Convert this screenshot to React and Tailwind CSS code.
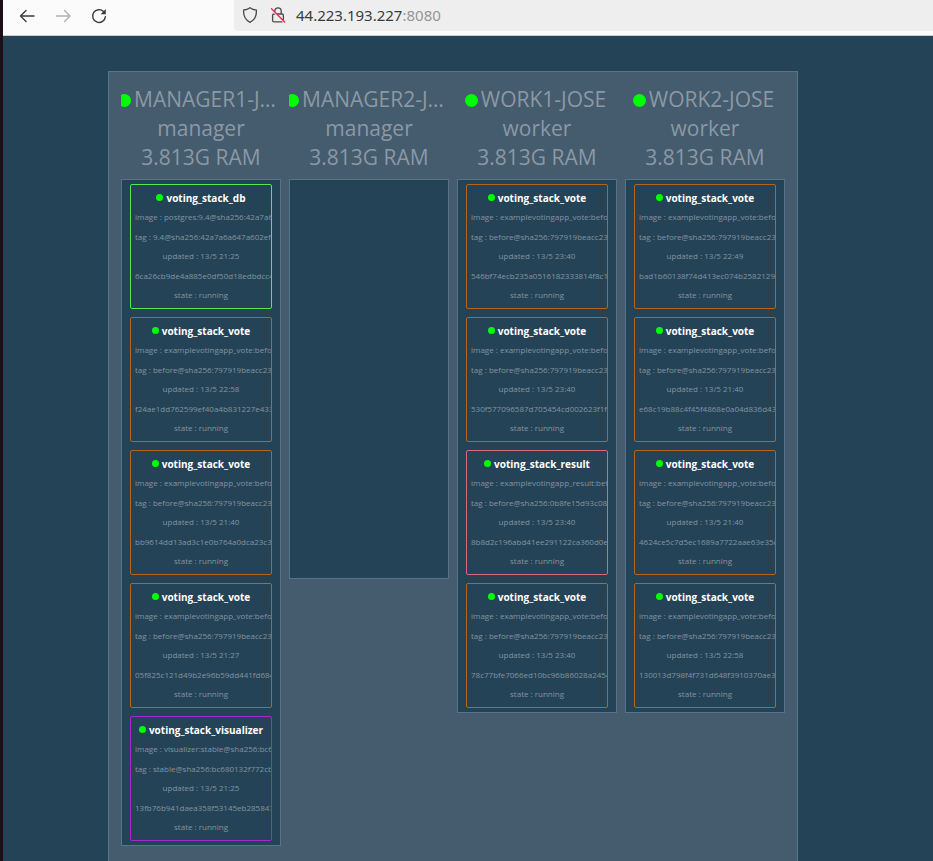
const VOTE_IMAGE = 'examplevotingapp_vote:befo';
const VOTE_TAG = 'before@sha256:797919beacc23';

const vote = (updated, id) => ({
  name: 'voting_stack_vote',
  image: VOTE_IMAGE,
  tag: VOTE_TAG,
  updated,
  id,
  border: 'border-[#b5651b]',
});

const NODES = [
  {
    name: 'MANAGER1-JOSE',
    role: 'manager',
    tasks: [
      {
        name: 'voting_stack_db',
        image: 'postgres:9.4@sha256:42a7a6a',
        tag: '9.4@sha256:42a7a6a647a602efa',
        updated: '13/5 21:25',
        id: '6ca26cb9de4a885e0df50d18edbdcc4',
        border: 'border-[#53e84b]',
      },
      vote('13/5 22:58', 'f24ae1dd762599ef40a4b831227e433'),
      vote('13/5 21:40', 'bb9614dd13ad3c1e0b764a0dca23c3'),
      vote('13/5 21:27', '05f825c121d49b2e96b59dd441fd684'),
      {
        name: 'voting_stack_visualizer',
        image: 'visualizer:stable@sha256:bc6',
        tag: 'stable@sha256:bc680132f772cb',
        updated: '13/5 21:25',
        id: '13fb76b941daea358f53145eb285847',
        border: 'border-[#a626d0]',
      },
    ],
  },
  { name: 'MANAGER2-JOSE', role: 'manager', tasks: [] },
  {
    name: 'WORK1-JOSE',
    role: 'worker',
    tasks: [
      vote('13/5 23:40', '546bf74ecb235a0516182333814f8c1'),
      vote('13/5 23:40', '530f577096587d705454cd002623f1f5'),
      {
        name: 'voting_stack_result',
        image: 'examplevotingapp_result:bef',
        tag: 'before@sha256:0b8fe15d93c083',
        updated: '13/5 23:40',
        id: '8b8d2c196abd41ee291122ca360d0e',
        border: 'border-[#d9677f]',
      },
      vote('13/5 23:40', '78c77bfe7066ed10bc96b86028a2454'),
    ],
  },
  {
    name: 'WORK2-JOSE',
    role: 'worker',
    tasks: [
      vote('13/5 22:49', 'bad1b60138f74d413ec074b25821293'),
      vote('13/5 21:40', 'e68c19b88c4f45f4868e0a04d836d43'),
      vote('13/5 21:40', '4624ce5c7d5ec1689a7722aae63e35c'),
      vote('13/5 22:58', '130013d798f4f731d648f3910370ae3'),
    ],
  },
];

function Toolbar() {
  return (
    <header className="flex h-9 shrink-0 border-b border-[#cccccc] bg-[#fbfbfb] text-[#3b3b3b]">
      <div className="flex w-[231px] shrink-0 items-center gap-5 pb-1 pl-4">
        <button type="button" aria-label="Back">
          <svg width="16" height="16" viewBox="0 0 16 16" fill="none" stroke="currentColor" strokeWidth="1.4" strokeLinecap="round" strokeLinejoin="round">
            <path d="M15 8H1.500M7 2.500L1.500 8l5.500 5.500" />
          </svg>
        </button>
        <button type="button" aria-label="Forward" className="text-[#b0b0b0]">
          <svg width="16" height="16" viewBox="0 0 16 16" fill="none" stroke="currentColor" strokeWidth="1.4" strokeLinecap="round" strokeLinejoin="round">
            <path d="M1.500 8h13.500M9.500 2.500L15 8l-5.500 5.500" />
          </svg>
        </button>
        <button type="button" aria-label="Reload">
          <svg width="16" height="16" viewBox="0 0 16 16" fill="none" stroke="currentColor" strokeWidth="1.4" strokeLinecap="round">
            <path d="M12.600 3.600A6.400 6.400 0 1 0 14.400 8.600" />
            <path d="M14.800 1v5.200H9.600z" fill="currentColor" stroke="none" />
          </svg>
        </button>
      </div>
      <div className="mb-1 flex flex-1 items-center rounded-bl bg-[#eeeeee] pb-0.5 pl-2">
        <svg width="16" height="18" viewBox="0 0 16 18" fill="none" stroke="#4a4a4a" strokeWidth="1.300" strokeLinejoin="round">
          <path d="M8 1.700C10 3.200 12.300 3.900 14.300 4c.5 5-1.300 9.800-6.300 12.300C3 13.800 1.200 9 1.700 4 3.700 3.900 6 3.200 8 1.700z" />
        </svg>
        <svg className="ml-3" width="16" height="18" viewBox="0 0 16 18" fill="none">
          <rect x="2.600" y="8" width="10.800" height="7.800" rx="1.400" stroke="#4a4a4a" strokeWidth="1.300" />
          <path d="M4.800 8V5a3.200 3.200 0 0 1 6.400 0v3" stroke="#4a4a4a" strokeWidth="1.300" />
          <path d="M1.500 3.800l12 12" stroke="#eeeeee" strokeWidth="1.500" />
          <path d="M1.500 2.800l13.200 13.200" stroke="#f02a58" strokeWidth="1.400" strokeLinecap="round" />
        </svg>
        <label className="ml-2.5 flex items-center font-['Noto_Sans',sans-serif] text-[15px] leading-5">
          <input
            type="text"
            aria-label="Address"
            defaultValue="44.223.193.227"
            className="field-sizing-content bg-transparent outline-none"
          />
          <span className="text-[#959595]">:8080</span>
        </label>
      </div>
    </header>
  );
}

function Task({ task }) {
  return (
    <li
      className={`grid h-[125px] grid-rows-6 items-center overflow-hidden rounded-xs border px-1 py-[3px] text-center text-[8px] leading-3 whitespace-nowrap text-[#8294a0] ${task.border}`}
    >
      <h3 className="flex min-w-0 items-center justify-center gap-[3px] text-[10px] font-bold text-white">
        <span className="size-[7px] shrink-0 rounded-full bg-[#00ff00]" />
        {task.name}
      </h3>
      <p className="min-w-0">image : {task.image}</p>
      <p className="min-w-0">tag : {task.tag}</p>
      <p className="min-w-0">updated : {task.updated}</p>
      <p className="min-w-0">{task.id}</p>
      <p className="min-w-0">state : running</p>
    </li>
  );
}

function Node({ node }) {
  return (
    <section className="w-40">
      <div className="mb-[7px] text-center text-[21px] leading-[29px] text-[#8b99a4]">
        <h2 className="truncate">
          <span className="mr-[3px] -ml-[3px] inline-block size-[13px] rounded-full bg-[#00ff00]" />
          {node.name}
        </h2>
        <p>{node.role}</p>
        <p>3.813G RAM</p>
      </div>
      <ul className="flex min-h-[400px] flex-col gap-2 border border-[#56748a] bg-[#254356] px-2 py-1">
        {node.tasks.map((task) => (
          <Task key={task.id} task={task} />
        ))}
      </ul>
    </section>
  );
}

export default function App() {
  return (
    <div className="flex h-screen flex-col overflow-hidden border-l-3 border-[#1c0d16] bg-[#254356] font-['Open_Sans',sans-serif]">
      <Toolbar />
      <main className="flex flex-1 justify-center pt-[35px] pr-[30px]">
        <div className="flex items-start gap-2 border border-b-0 border-[#56748a] bg-[#455b6e] px-3 pt-[13px]">
          {NODES.map((node) => (
            <Node key={node.name} node={node} />
          ))}
        </div>
      </main>
    </div>
  );
}
